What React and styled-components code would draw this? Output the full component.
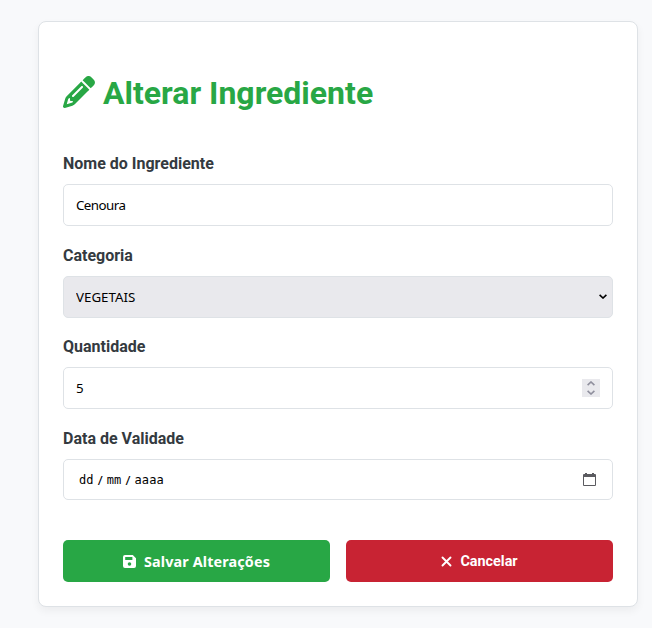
import React from "react";
import styled, { createGlobalStyle } from "styled-components";
import { FaPencil } from "react-icons/fa6";

const GlobalStyle = createGlobalStyle`
  *, *::before, *::after { box-sizing: border-box; }
  body {
    margin: 0;
    background: #f8f9fa;
    font-family: Roboto, sans-serif;
    color: #343a40;
  }
`;

const Page = styled.main`
  min-height: 628px;
  padding: 21px 14px 21px 38px;
  background: #f8f9fb;
`;

const Card = styled.form`
  width: 600px;
  height: 586px;
  padding: 24px;
  background: #fff;
  border: 1px solid #dee2e6;
  border-radius: 8px;
  box-shadow: 0 4px 8px rgba(0, 0, 0, 0.05);
`;

const Title = styled.h1`
  display: flex;
  align-items: center;
  gap: 8px;
  height: 38px;
  margin: 28px 0 42px;
  color: #28a745;
  font-size: 32px;
  font-weight: 700;
  line-height: 38px;
  white-space: nowrap;

  svg { flex: none; margin-bottom: 2px; }
`;

const Field = styled.div`
  height: 71.67px;
  margin-bottom: 20px;
`;

const Label = styled.label`
  display: block;
  height: 19px;
  margin-bottom: 11px;
  font-size: 16px;
  font-weight: 700;
  line-height: 19px;
`;

const Control = styled.div`
  display: flex;
  align-items: center;
  height: ${(p) => p.$height || 41.67}px;
  padding: 0 ${(p) => p.$right || 12}px 0 12px;
  background: ${(p) => (p.$filled ? "#e9e9ed" : "#fff")};
  border: 1px solid #dee2e6;
  border-radius: 5px;
  color: #000;
`;

const TextInput = styled.input`
  flex: 1;
  min-width: 0;
  padding: 0;
  border: 0;
  outline: 0;
  background: transparent;
  color: #000;
  font: 13.33px "Noto Sans", sans-serif;
  letter-spacing: ${(p) => p.$spacing || 0}px;
`;

const Spinner = styled.span`
  display: flex;
  flex-direction: column;
  align-items: center;
  justify-content: center;
  gap: 4px;
  width: 18px;
  height: 18px;
  background: #e9e9ed;
`;

const DateParts = styled.div`
  display: flex;
  flex: 1;
  gap: 4px;
  padding: 2px 0 0 3px;
  font: 12px "DejaVu Sans Mono", monospace;
  letter-spacing: 0.15px;
`;

const Slash = styled.span`
  width: 5px;
  text-align: center;
  font-family: "Noto Sans", sans-serif;
  font-size: 13.33px;
  line-height: 14px;
`;

const Actions = styled.div`
  display: grid;
  grid-template-columns: 1fr 1fr;
  gap: 16px;
  margin-top: 39.33px;
`;

const Button = styled.button`
  display: flex;
  align-items: center;
  justify-content: center;
  gap: 8px;
  height: 42px;
  padding: 2px 0 0;
  border: 0;
  border-radius: 5px;
  background: ${(p) => (p.$danger ? "#c82333" : "#28a745")};
  color: #fff;
  font: 700 14.4px ${(p) => (p.$danger ? "Roboto" : '"Noto Sans"')}, sans-serif;
  letter-spacing: ${(p) => (p.$danger ? 0 : 0.12)}px;
`;

const Chevron = ({ up, color = "#000", size = 8 }) => (
  <svg width={size} height="5" viewBox="0 0 8 5" fill="none" stroke={color} strokeWidth="1.6">
    <path d={up ? "M.6 4.2 4 1l3.4 3.2" : "M.6.8 4 4 7.4.8"} />
  </svg>
);

const CalendarIcon = () => (
  <svg width="13" height="13" viewBox="0 0 13 13" fill="#5b5b60">
    <path fillRule="evenodd" d="M2 0h2v1h5V0h2v1h1a1 1 0 0 1 1 1v10a1 1 0 0 1-1 1H1a1 1 0 0 1-1-1V2a1 1 0 0 1 1-1h1zM1 4v8h11V4z" />
  </svg>
);

const SaveIcon = () => (
  <svg width="13" height="13" viewBox="0 0 13 13" fill="#fff">
    <path fillRule="evenodd" d="M2 0h7.8L13 3.2V11a2 2 0 0 1-2 2H2a2 2 0 0 1-2-2V2a2 2 0 0 1 2-2zm.2 2v3h7.2V2zm4.3 5.2a1.8 1.8 0 1 0 0 3.6 1.8 1.8 0 0 0 0-3.6z" />
  </svg>
);

const CloseIcon = () => (
  <svg width="11" height="11" viewBox="0 0 11 11" stroke="#fff" strokeWidth="1.9" strokeLinecap="round">
    <path d="m1.5 1.5 8 8m0-8-8 8" />
  </svg>
);

export default function App() {
  return (
    <>
      <GlobalStyle />
      <Page>
        <Card>
          <Title><FaPencil size={32} />Alterar Ingrediente</Title>
          <Field>
            <Label>Nome do Ingrediente</Label>
            <Control><TextInput defaultValue="Cenoura" $spacing={-0.55} /></Control>
          </Field>
          <Field>
            <Label>Categoria</Label>
            <Control $filled $height={42.4} $right={5}>
              <TextInput defaultValue="VEGETAIS" readOnly />
              <Chevron />
            </Control>
          </Field>
          <Field>
            <Label>Quantidade</Label>
            <Control>
              <TextInput defaultValue="5" />
              <Spinner><Chevron up color="#8f8f9d" /><Chevron color="#8f8f9d" /></Spinner>
            </Control>
          </Field>
          <Field>
            <Label>Data de Validade</Label>
            <Control $height={41} $right={16}>
              <DateParts>
                <span>dd</span><Slash>/</Slash><span>mm</span><Slash>/</Slash><span>aaaa</span>
              </DateParts>
              <CalendarIcon />
            </Control>
          </Field>
          <Actions>
            <Button type="button"><SaveIcon />Salvar Alterações</Button>
            <Button type="button" $danger><CloseIcon />Cancelar</Button>
          </Actions>
        </Card>
      </Page>
    </>
  );
}
